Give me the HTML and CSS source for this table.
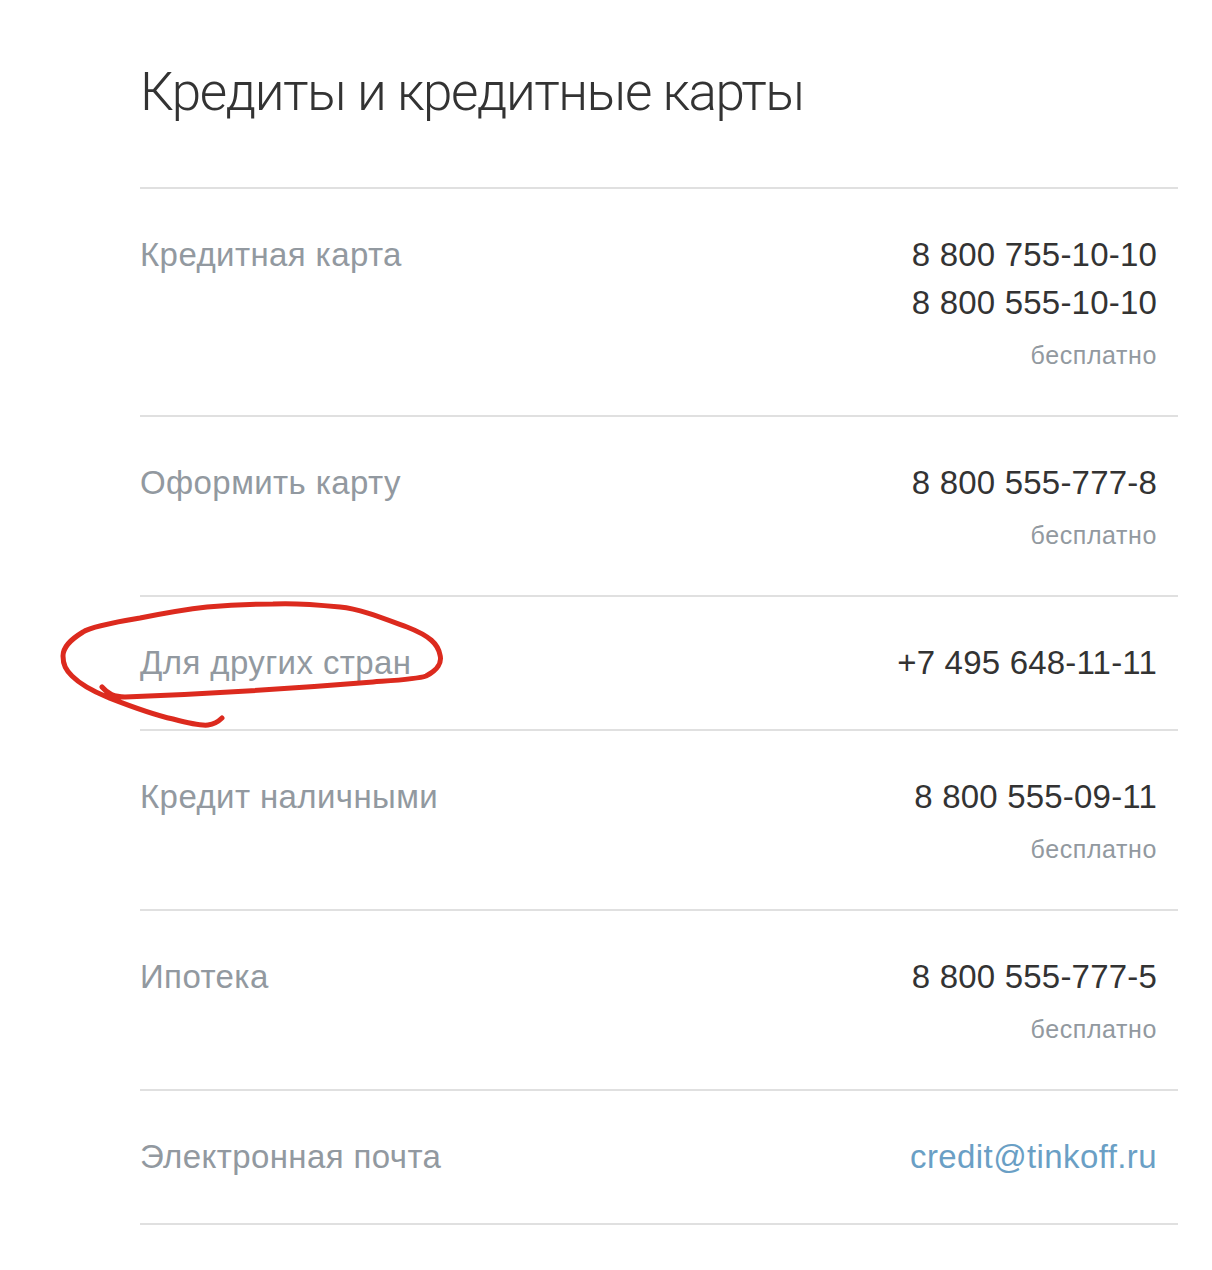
FILE: index.html
```html
<!DOCTYPE html>
<html lang="ru">

<head>
  <meta charset="UTF-8" />
  <meta name="viewport" content="width=device-width, initial-scale=1.0" />
  <title>Кредиты и кредитные карты</title>
  <link rel="stylesheet" href="styles.css">
</head>

<body>
  <div class="contacts">
    <h1>Кредиты и кредитные карты</h1>

    <div class="contact-list">
      <div class="contact-row">
        <div class="contact-label">Кредитная карта</div>
        <div class="contact-value">
          <div class="phone">8 800 755-10-10</div>
          <div class="phone">8 800 555-10-10</div>
          <div class="note">бесплатно</div>
        </div>
      </div>

      <div class="contact-row">
        <div class="contact-label">Оформить карту</div>
        <div class="contact-value">
          <div class="phone">8 800 555-777-8</div>
          <div class="note">бесплатно</div>
        </div>
      </div>

      <div class="contact-row">
        <div class="contact-label">Для других стран</div>
        <div class="contact-value">
          <div class="phone">+7 495 648-11-11</div>
        </div>
      </div>

      <div class="contact-row">
        <div class="contact-label">Кредит наличными</div>
        <div class="contact-value">
          <div class="phone">8 800 555-09-11</div>
          <div class="note">бесплатно</div>
        </div>
      </div>

      <div class="contact-row">
        <div class="contact-label">Ипотека</div>
        <div class="contact-value">
          <div class="phone">8 800 555-777-5</div>
          <div class="note">бесплатно</div>
        </div>
      </div>

      <div class="contact-row">
        <div class="contact-label">Электронная почта</div>
        <div class="contact-value">
          <a class="email" href="mailto:credit@tinkoff.ru">credit@tinkoff.ru</a>
        </div>
      </div>
    </div>
  </div>

  <!-- hand-drawn marker over "Для других стран" -->
  <svg class="scribble" width="1212" height="1270" viewBox="0 0 1212 1270">
    <path d="M102 687 C108 694 114 697 125 697 C200 694 300 688 373 682 C400 680 418 679 426 676 C438 670 442 662 440 655 C438 644 430 636 407 627 C380 617 360 609 340 607 C310 604 290 603 273 604 C250 604 228 605 207 607 C180 610 160 614 140 618 C110 623 90 627 83 632 C70 640 63 647 63 656 C63 665 66 670 72 676 C82 686 95 692 107 697 C130 706 150 714 173 719 C188 723 200 726 208 725 C215 724 219 721 222 718" />
  </svg>
</body>

</html>
```

FILE: styles.css
```css
* {
  box-sizing: border-box;
  margin: 0;
  padding: 0;
}

body {
  font-family: 'Liberation Sans', Arial, sans-serif;
  background: #fff;
  color: #333;
  position: relative;
  min-height: 100vh;
}

.contacts {
  padding: 60px 34px 40px 140px;
}

h1 {
  font-family: 'Roboto', 'Liberation Sans', sans-serif;
  font-weight: 300;
  font-size: 53px;
  line-height: 64px;
  color: #333;
  letter-spacing: -1.4px;
  margin-bottom: 63px;
}

.contact-list {
  border-top: 2px solid #e0e0e0;
}

.contact-row {
  display: flex;
  justify-content: space-between;
  align-items: flex-start;
  padding: 42px 21px 42px 0;
  border-bottom: 2px solid #e0e0e0;
}

.contact-label {
  font-size: 33px;
  line-height: 48px;
  letter-spacing: 0.4px;
  color: #9299a0;
}

.contact-value {
  text-align: right;
}

.phone {
  font-size: 33px;
  line-height: 47px;
  letter-spacing: 0.2px;
  color: #333;
}

.phone + .phone {
  margin-top: 1px;
}

.note {
  font-size: 25px;
  line-height: 32px;
  letter-spacing: 0.6px;
  margin-top: 13px;
  margin-bottom: 2px;
  color: #9299a0;
}

.email {
  font-size: 33px;
  line-height: 48px;
  letter-spacing: 0.4px;
  color: #6a9fc5;
  text-decoration: none;
}

.scribble {
  position: absolute;
  top: 0;
  left: 0;
  pointer-events: none;
}

.scribble path {
  fill: none;
  stroke: #dc2a1e;
  stroke-width: 5;
  stroke-linecap: round;
  stroke-linejoin: round;
}
```
